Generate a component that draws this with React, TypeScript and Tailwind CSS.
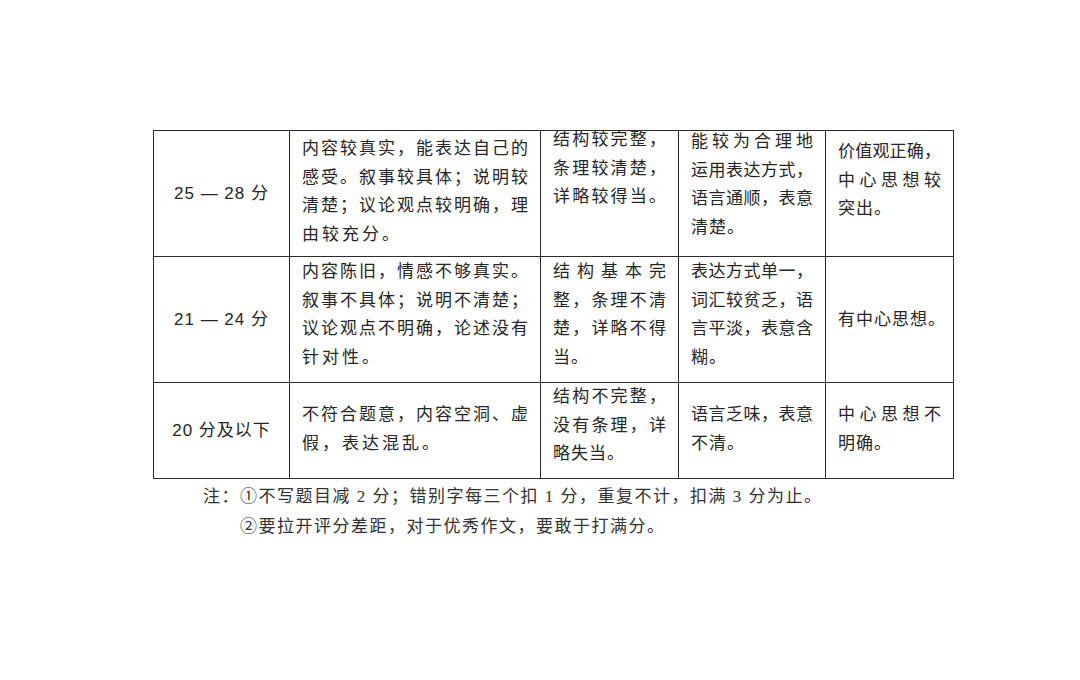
import React from 'react';

type Cell = {
  lines: string[];
  full: number; // how many leading lines are stretched edge to edge
  off: string; // vertical offset of the text block inside the cell
  track: string;
};

type Row = {
  h: string;
  score: string;
  cells: Cell[];
};

const rows: Row[] = [
  {
    h: 'h-[126px]',
    score: '25 — 28 分',
    cells: [
      {
        lines: ['内容较真实，能表达自己的', '感受。叙事较具体；说明较', '清楚；议论观点较明确，理', '由较充分。'],
        full: 3,
        off: 'mt-[2px]',
        track: 'tracking-[3px]',
      },
      { lines: ['结构较完整，', '条理较清楚，', '详略较得当。'], full: 3, off: '-mt-[7px]', track: 'tracking-[1px]' },
      {
        lines: ['能较为合理地', '运用表达方式，', '语言通顺，表意', '清楚。'],
        full: 3,
        off: '-mt-[5px]',
        track: 'tracking-[1px]',
      },
      { lines: ['价值观正确，', '中心思想较', '突出。'], full: 2, off: 'mt-[5px]', track: 'tracking-[1px]' },
    ],
  },
  {
    h: 'h-[126px]',
    score: '21 — 24 分',
    cells: [
      {
        lines: ['内容陈旧，情感不够真实。', '叙事不具体；说明不清楚；', '议论观点不明确，论述没有', '针对性。'],
        full: 3,
        off: '-mt-[1px]',
        track: 'tracking-[3px]',
      },
      {
        lines: ['结构基本完', '整，条理不清', '楚，详略不得', '当。'],
        full: 3,
        off: '-mt-[1px]',
        track: 'tracking-[1px]',
      },
      {
        lines: ['表达方式单一，', '词汇较贫乏，语', '言平淡，表意含', '糊。'],
        full: 3,
        off: '-mt-[1px]',
        track: 'tracking-[1px]',
      },
      { lines: ['有中心思想。'], full: 0, off: 'mt-[47px]', track: 'tracking-[1px]' },
    ],
  },
  {
    h: 'h-[96px]',
    score: '20 分及以下',
    cells: [
      { lines: ['不符合题意，内容空洞、虚', '假，表达混乱。'], full: 1, off: 'mt-[16px]', track: 'tracking-[3px]' },
      { lines: ['结构不完整，', '没有条理，详', '略失当。'], full: 2, off: '-mt-[2px]', track: 'tracking-[1px]' },
      { lines: ['语言乏味，表意', '不清。'], full: 1, off: 'mt-[16px]', track: 'tracking-[1px]' },
      { lines: ['中心思想不', '明确。'], full: 1, off: 'mt-[16px]', track: 'tracking-[1px]' },
    ],
  },
];

const TextCell: React.FC<{ cell: Cell }> = ({ cell }) => (
  <div className={`${cell.off} flex flex-col`}>
    {cell.lines.map((line, i) =>
      i < cell.full ? (
        <div key={i} className="h-[28.5px] leading-[28.5px] whitespace-nowrap text-justify [text-align-last:justify]">
          {line}
        </div>
      ) : (
        <div key={i} className={`h-[28.5px] leading-[28.5px] whitespace-nowrap ${cell.track}`}>
          {line}
        </div>
      )
    )}
  </div>
);

export default function App() {
  return (
    <div className="min-h-[680px] w-[1080px] bg-white pt-[130px] pl-[153px] text-[#262626]">
      <table className="w-[800px] table-fixed border-collapse font-['Noto_Sans_CJK_SC',sans-serif] text-[17px]">
        <colgroup>
          <col className="w-[136px]" />
          <col className="w-[251px]" />
          <col className="w-[138px]" />
          <col className="w-[147px]" />
          <col className="w-[128px]" />
        </colgroup>
        <tbody>
          {rows.map((row) => (
            <tr key={row.score}>
              <td
                className={`${row.h} border border-[#2b2b2b] p-0 text-center align-middle font-['Liberation_Sans','Noto_Sans_CJK_SC',sans-serif] tracking-[1px]`}
              >
                {row.score}
              </td>
              {row.cells.map((cell, i) => (
                <td key={i} className={`${row.h} overflow-visible border border-[#2b2b2b] px-[12px] py-0 align-top`}>
                  <TextCell cell={cell} />
                </td>
              ))}
            </tr>
          ))}
        </tbody>
      </table>
      <div className="mt-[3px] font-['Liberation_Serif','Noto_Sans_CJK_SC',serif] text-[17px] leading-[30px] tracking-[1.5px] text-[#333]">
        <div className="pl-[50px]">注：①不写题目减 2 分；错别字每三个扣 1 分，重复不计，扣满 3 分为止。</div>
        <div className="pl-[87px]">②要拉开评分差距，对于优秀作文，要敢于打满分。</div>
      </div>
    </div>
  );
}
